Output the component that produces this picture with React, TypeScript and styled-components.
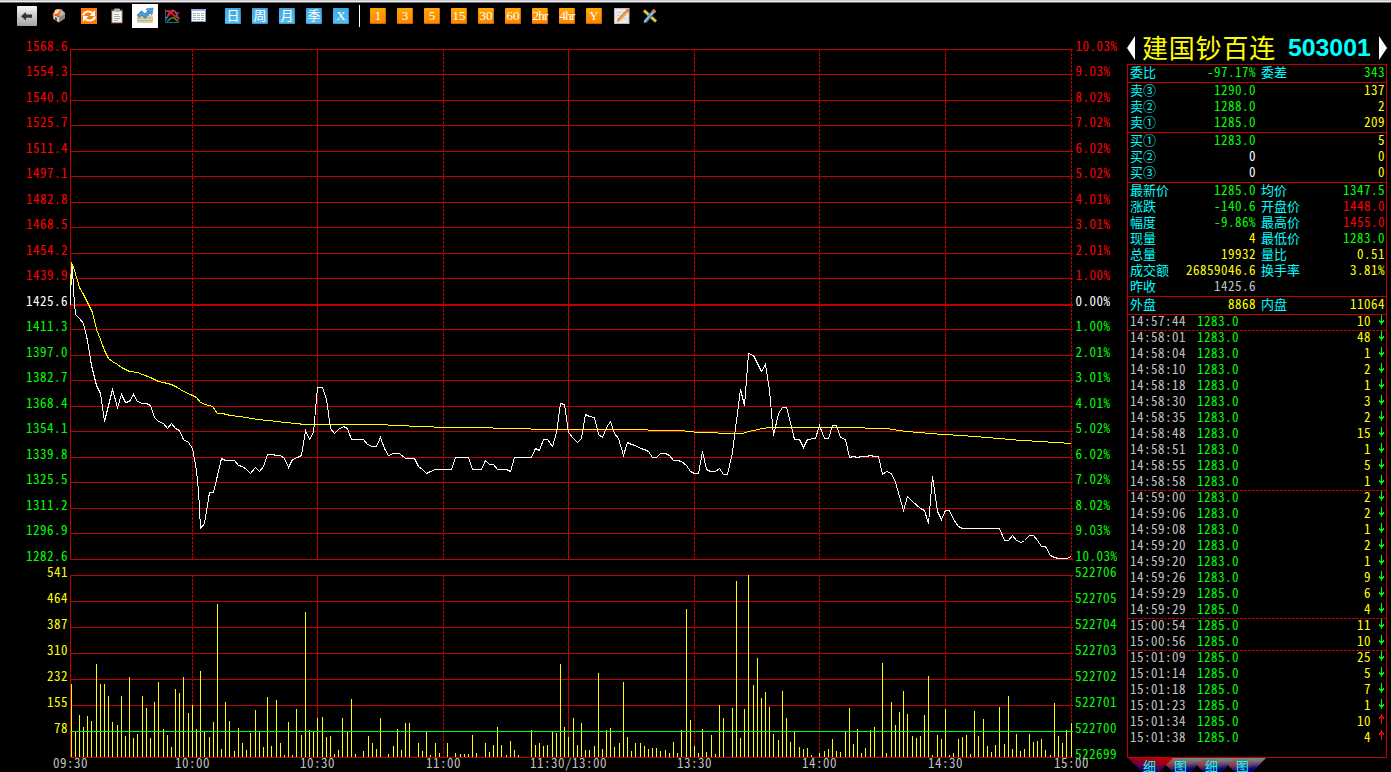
import styled, { createGlobalStyle } from "styled-components";

const RED = "#c00000";
const UP = "#ff0000";
const DOWN = "#00ff00";
const YELLOW = "#ffff00";
const CYAN = "#00ffff";
const GRAY = "#c0c0c0";

const minutes = ["1", "3", "5", "15", "30", "60", "2hr", "4hr", "Y"];
const periods = ["日", "周", "月", "季", "X"];

const prices = [
  "1568.6", "1554.3", "1540.0", "1525.7", "1511.4", "1497.1", "1482.8", "1468.5", "1454.2", "1439.9",
  "1425.6",
  "1411.3", "1397.0", "1382.7", "1368.4", "1354.1", "1339.8", "1325.5", "1311.2", "1296.9", "1282.6",
];
const percents = [
  "10.03%", "9.03%", "8.02%", "7.02%", "6.02%", "5.02%", "4.01%", "3.01%", "2.01%", "1.00%",
  "0.00%",
  "1.00%", "2.01%", "3.01%", "4.01%", "5.02%", "6.02%", "7.02%", "8.02%", "9.03%", "10.03%",
];
const volumeScale = ["541", "464", "387", "310", "232", "155", "78", ""];
const openScale = ["522706", "522705", "522704", "522703", "522702", "522701", "522700", "522699"];

const times = [
  { x: 70, label: "09:30" },
  { x: 192, label: "10:00", dashed: true },
  { x: 317, label: "10:30" },
  { x: 443, label: "11:00", dashed: true },
  { x: 568, label: "11:30/13:00" },
  { x: 694, label: "13:30", dashed: true },
  { x: 819, label: "14:00", dashed: true },
  { x: 945, label: "14:30", dashed: true },
  { x: 1071, label: "15:00", dashed: true },
];

// one entry per minute, height in px
const volumes = [
  73, 26, 42, 30, 41, 36, 93, 73, 73, 61, 35, 32, 61, 21, 80, 19, 23, 61, 49, 19,
  55, 75, 28, 22, 10, 68, 64, 80, 44, 52, 28, 86, 26, 20, 35, 153, 8, 55, 36, 6,
  29, 14, 7, 24, 47, 26, 10, 60, 11, 57, 14, 2, 35, 2, 48, 22, 145, 27, 26, 39,
  40, 20, 21, 3, 7, 39, 26, 58, 3, 0, 6, 21, 14, 8, 39, 0, 3, 11, 28, 7,
  34, 34, 0, 14, 6, 26, 2, 14, 4, 0, 14, 0, 4, 3, 3, 3, 22, 4, 0, 14,
  5, 12, 30, 12, 2, 16, 7, 2, 0, 0, 27, 12, 14, 11, 12, 26, 24, 93, 30, 20,
  39, 12, 34, 7, 7, 11, 84, 8, 27, 29, 10, 14, 75, 20, 6, 14, 14, 11, 8, 9,
  9, 6, 7, 4, 15, 4, 27, 148, 37, 11, 4, 28, 5, 22, 3, 52, 39, 0, 49, 176,
  19, 48, 182, 72, 99, 59, 65, 50, 23, 17, 66, 39, 15, 26, 10, 8, 9, 2, 0, 4,
  6, 8, 18, 6, 5, 26, 49, 13, 28, 4, 9, 27, 30, 0, 94, 4, 55, 32, 45, 66,
  43, 21, 19, 21, 42, 81, 2, 22, 18, 48, 2, 4, 18, 20, 22, 3, 46, 21, 38, 11,
  5, 12, 50, 13, 61, 8, 23, 6, 8, 23, 15, 16, 18, 7, 2, 54, 21, 14, 27, 34,
];

const priceLine =
  "70,304 70,285 71,284 71,267 72,267 73,290 74,302 75,314 79,318 83,323 87,340 91,365 96,385 100,393 104,421 108,405 112,389 117,407 " +
  "121,394 125,402 129,401 133,394 137,401 142,403 146,403 150,405 154,417 158,421 163,423 167,428 171,423 " +
  "175,428 179,430 183,439 188,442 192,448 196,470 198,490 200,528 204,523 209,492 213,492 217,475 221,458 225,460 " +
  "234,460 238,465 242,466 246,469 250,473 255,467 259,471 263,466 267,454 272,454 276,455 280,455 284,458 " +
  "288,467 292,459 297,457 301,455 305,430 309,439 313,432 317,387 322,387 326,399 330,428 334,433 338,429 " +
  "343,426 347,428 351,439 363,439 367,444 372,446 376,446 380,437 384,448 388,455 393,453 399,453 405,458 " +
  "414,458 418,466 422,469 426,473 430,471 435,469 451,469 455,457 468,457 472,469 481,469 485,460 489,464 " +
  "493,464 497,469 506,469 510,471 514,457 531,457 535,448 539,450 543,439 547,439 552,446 556,432 560,403 " +
  "564,404 568,432 573,438 577,442 581,438 585,414 589,416 594,417 598,434 602,437 606,427 610,421 614,433 " +
  "618,438 623,455 627,442 631,444 635,445 640,448 644,449 648,451 652,457 656,457 660,453 665,453 669,455 " +
  "673,460 677,460 681,461 686,465 690,471 694,473 698,473 702,451 706,469 710,471 715,471 719,468 723,474 " +
  "727,474 732,452 736,420 740,389 744,405 748,353 753,355 757,363 761,371 765,364 769,390 773,435 778,413 " +
  "782,407 786,407 790,422 794,439 799,439 803,447 807,439 815,438 819,425 824,438 828,438 832,425 836,425 " +
  "840,437 845,439 849,457 853,456 857,457 861,456 866,456 870,455 874,456 878,456 882,474 886,471 891,473 " +
  "895,482 899,496 903,510 907,496 912,501 920,508 924,510 928,523 932,476 937,511 941,519 945,510 949,510 " +
  "953,519 958,526 962,528 999,528 1004,540 1008,540 1012,535 1016,540 1021,542 1024,540 1029,535 1033,535 " +
  "1037,540 1041,546 1045,546 1050,555 1054,557 1058,558 1066,558 1071,556";

const averageLine =
  "70,285 71,262 74,270 79,287 83,294 87,302 92,312 96,329 100,339 104,350 108,358 112,361 117,364 121,367 " +
  "129,371 137,372 142,374 150,377 158,381 163,382 171,384 177,387 183,391 190,394 196,397 200,402 205,404 " +
  "212,406 217,413 222,413 230,415 246,417 257,419 268,420 285,422 305,424 387,424 388,425 408,425 409,426 " +
  "433,426 434,427 492,427 493,428 530,428 531,429 647,429 648,430 684,430 685,431 693,431 694,432 717,432 " +
  "718,433 742,433 748,431 753,430 762,428 770,427 863,427 866,428 888,428 891,429 900,430 905,431 920,432 " +
  "928,433 945,434 960,435 975,436 985,437 1000,438 1008,439 1022,440 1040,441 1055,442 1071,443";

const sells = [
  ["卖③", "1290.0", "137"],
  ["卖②", "1288.0", "2"],
  ["卖①", "1285.0", "209"],
];
const buys = [
  ["买①", "1283.0", "5"],
  ["买②", "0", "0"],
  ["买③", "0", "0"],
];
const quotes = [
  ["最新价", "1285.0", DOWN, "均价", "1347.5", DOWN],
  ["涨跌", "-140.6", DOWN, "开盘价", "1448.0", UP],
  ["幅度", "-9.86%", DOWN, "最高价", "1455.0", UP],
  ["现量", "4", YELLOW, "最低价", "1283.0", DOWN],
  ["总量", "19932", YELLOW, "量比", "0.51", YELLOW],
  ["成交额", "26859046.6", YELLOW, "换手率", "3.81%", YELLOW],
  ["昨收", "1425.6", GRAY, "", "", GRAY],
];

const deals: [string, string, number, boolean?][] = [
  ["14:57:44", "1283.0", 10],
  ["14:58:01", "1283.0", 48, true],
  ["14:58:04", "1283.0", 1],
  ["14:58:10", "1283.0", 2],
  ["14:58:18", "1283.0", 1],
  ["14:58:30", "1283.0", 3],
  ["14:58:35", "1283.0", 2],
  ["14:58:48", "1283.0", 15],
  ["14:58:51", "1283.0", 1],
  ["14:58:55", "1283.0", 5],
  ["14:58:58", "1283.0", 1],
  ["14:59:00", "1283.0", 2, true],
  ["14:59:06", "1283.0", 2],
  ["14:59:08", "1283.0", 1],
  ["14:59:20", "1283.0", 2],
  ["14:59:20", "1283.0", 1],
  ["14:59:26", "1283.0", 9],
  ["14:59:29", "1285.0", 6],
  ["14:59:29", "1285.0", 4],
  ["15:00:54", "1285.0", 11, true],
  ["15:00:56", "1285.0", 10],
  ["15:01:09", "1285.0", 25, true],
  ["15:01:14", "1285.0", 5],
  ["15:01:18", "1285.0", 7],
  ["15:01:23", "1285.0", 1],
  ["15:01:34", "1285.0", 10],
  ["15:01:38", "1285.0", 4],
];

const priceY = (i: number) => Math.floor(49 + i * 25.5);
const barX = (i: number) => 71 + Math.floor((i * 1000) / 239);
const trend = (i: number) => (i < 10 ? UP : i === 10 ? "#ffffff" : DOWN);

const Chart = () => (
  <ChartArea width="1127" height="740" viewBox="0 32 1127 740">
    <g stroke={RED} strokeWidth="1" shapeRendering="crispEdges">
      {prices.map((p, i) => (
        <line key={p} x1="70" x2="1073" y1={priceY(i) + (i === 10 ? 1 : 0.5)} y2={priceY(i) + (i === 10 ? 1 : 0.5)} strokeWidth={i === 10 ? 2 : 1} />
      ))}
      {openScale.map((v, i) => (
        <line key={v} x1="70" x2="1073" y1={575.5 + i * 26} y2={575.5 + i * 26} />
      ))}
      {times.map((t) => (
        <g key={t.x} strokeDasharray={t.dashed ? "3 1" : undefined}>
          <line x1={t.x + 0.5} x2={t.x + 0.5} y1="49" y2="560" />
          <line x1={t.x + 0.5} x2={t.x + 0.5} y1="575" y2="758" />
        </g>
      ))}
    </g>
    <g fill={YELLOW} shapeRendering="crispEdges">
      {volumes.map((h, i) => (
        <rect key={i} x={barX(i)} y={757 - h} width="1" height={h} />
      ))}
      <rect x="70" y="731" width="1003" height="1" fill={DOWN} />
    </g>
    <g fill="none" strokeWidth="1" shapeRendering="crispEdges" transform="translate(0.5 0.5)">
      <polyline points={averageLine} stroke={YELLOW} />
      <polyline points={priceLine} stroke="#ffffff" />
    </g>
    {prices.map((p, i) => (
      <g key={p} fill={trend(i)}>
        <text x="26" y={priceY(i) + 2}>{p}</text>
        <text x="1075.500" y={priceY(i) + 2}>{percents[i]}</text>
      </g>
    ))}
    {openScale.map((v, i) => (
      <g key={v}>
        <text x={68 - volumeScale[i].length * 7} y={577 + i * 26} fill={YELLOW}>{volumeScale[i]}</text>
        <text x="1075" y={577 + i * 26} fill={DOWN}>{v}</text>
      </g>
    ))}
    {times.map((t) => (
      <text key={t.x} x={t.x + 0.5 - t.label.length * 3.5} y="768" fill={GRAY}>{t.label}</text>
    ))}
  </ChartArea>
);

const BackIcon = () => (
  <svg width="20" height="20" viewBox="0 0 20 20">
    <defs>
      <linearGradient id="back" x1="0" y1="0" x2="0" y2="1">
        <stop offset="0" stopColor="#f6f6f6" />
        <stop offset="1" stopColor="#a4a4a4" />
      </linearGradient>
    </defs>
    <rect width="20" height="20" rx="1" fill="url(#back)" />
    <path d="M4 10.2 9 6v2.6h6v3.2H9v2.6z" fill="#333" />
  </svg>
);

const HomeIcon = () => (
  <svg width="16" height="16" viewBox="0 0 16 16">
    <path d="M2 6.500l6 2.500v5.500L2.500 11z" fill="#d9d4cf" />
    <path d="M8 9l6-3.500v5L8 14.500z" fill="#8d8881" />
    <path d="M1 6.500 5 1.500l5-.5-2.500 7.500z" fill="#e8661b" />
    <path d="M4 2l4-1 1 1-3 4-3 .5z" fill="#f4d8bd" />
    <path d="M10 1l4.500 4.500L8 9.500 8.500 6z" fill="#b9b6b3" />
    <path d="M9.500 1.500 8 8.500" stroke="#f08a3c" strokeWidth="1.500" />
    <path d="M4 9l2 1v3l-2-1.200z" fill="#6a3a1b" />
  </svg>
);

const RefreshIcon = () => (
  <svg width="16" height="16" viewBox="0 0 16 16">
    <rect width="16" height="16" fill="#ff7900" />
    <g fill="none" stroke="#fff" strokeWidth="2">
      <path d="M2 7.500C3 3.500 8 2 11.500 5" />
      <path d="M14 8.500C13 12.500 8 14 4.500 11" />
    </g>
    <path d="M14 2v6H8.500zM2 14V8h5.500z" fill="#fff" />
  </svg>
);

const ClipboardIcon = () => (
  <svg width="16" height="16" viewBox="0 0 16 16">
    <rect x="2" y="1.500" width="12" height="14" rx="1" fill="#7a4630" />
    <rect x="3.200" y="3" width="9.600" height="11.500" fill="#f1f6f4" />
    <rect x="5" y="0.500" width="6" height="3.500" rx="1" fill="#a9adac" />
    <path d="M5 6.500h5M5 8.500h6M5 10.500h6M5 12.500h4" stroke="#9fb7b4" />
  </svg>
);

const TrendIcon = () => (
  <svg width="18" height="18" viewBox="0 0 18 18">
    <path d="M1 10l3-2h12l1 2v5l-1 1H2l-1-1z" fill="#dccda9" />
    <path d="M1 11h16M1 13.500h16" stroke="#b9a67b" strokeWidth="0.700" />
    <path d="M2 9.500 5.500 6l3.500 3 5-5" fill="none" stroke="#256fae" strokeWidth="3.600" />
    <path d="M2 9.500 5.500 6l3.500 3 5-5" fill="none" stroke="#4ba3dd" strokeWidth="2.200" />
    <path d="M10 2l7-1-1 7z" fill="#4ba3dd" stroke="#256fae" strokeWidth="0.600" />
  </svg>
);

const CurvesIcon = () => (
  <svg width="16" height="16" viewBox="0 0 16 16">
    <g fill="none">
      <path d="M1.500 1v13.500H15" stroke="#2d5f9e" />
      <path d="M2 11C5 7 6 1.500 9.500 2.500s3 6 5.500 9" stroke="#2f72d6" strokeWidth="1.800" />
      <path d="M2 3.500c3-2 5 1 8 4l5 3" stroke="#f01818" strokeWidth="1.800" />
      <path d="M3 8.500c2 0 4-6.500 7-5s3 2.500 5 1" stroke="#f01818" strokeWidth="1.600" />
      <path d="M3 13c3-1 4-5 7-3s2 3 4.500 3" stroke="#3b8a28" strokeWidth="1.800" />
    </g>
  </svg>
);

const TableIcon = () => (
  <svg width="16" height="16" viewBox="0 0 16 16" shapeRendering="crispEdges">
    <rect x="0.500" y="1.500" width="14" height="12" fill="#fff" stroke="#8797c4" />
    <rect x="1" y="1" width="14" height="2" fill="#9db0df" />
    <path d="M2 5.500h12M2 7.500h12M2 9.500h12M2 11.500h12" stroke="#a5adbb" strokeDasharray="3 1" />
  </svg>
);

const NoteIcon = () => (
  <svg width="16" height="16" viewBox="0 0 16 16">
    <rect x="0.500" y="0.500" width="14.500" height="15" fill="#e9e9e9" stroke="#bdbdbd" />
    <path d="M3 4.500h9M3 7.500h9M3 10.500h9" stroke="#d0d0d0" />
    <path d="M3 14l1-3L13 1.500l2 2L6 13z" fill="#f3a93b" />
    <path d="M3.500 13.500l1-2.500L13.500 1.500" fill="none" stroke="#8a5c20" strokeWidth="0.700" />
    <path d="M12.500 2l1.200-1.200 2 2L14.500 4z" fill="#d96d5d" />
  </svg>
);

const ToolsIcon = () => (
  <svg width="16" height="16" viewBox="0 0 16 16">
    <path d="M2 2.500 14 13.500" stroke="#77761c" strokeWidth="3.600" />
    <path d="M2 2.500 14 13.500" stroke="#e0d83c" strokeWidth="2" />
    <path d="M3 14 12 3" stroke="#456da3" strokeWidth="3.600" />
    <path d="M2 14.500 12 3" stroke="#9bc0e8" strokeWidth="1.800" />
    <path d="M11 1.500l2.500 3" stroke="#e07c2a" strokeWidth="2.500" />
  </svg>
);

const DealArrow = ({ up }: { up: boolean }) => (
  <svg width="5" height="11" viewBox="0 0 5 11" shapeRendering="crispEdges" fill={up ? UP : DOWN}>
    <g transform={up ? "rotate(180 2.5 5.5)" : undefined}>
      <rect x="2" y="1" width="1" height="10" />
      <rect x="1" y="7" width="3" height="2" />
      <rect y="6" width="1" height="2" />
      <rect x="4" y="6" width="1" height="2" />
    </g>
  </svg>
);

const Tabs = () => (
  <TabBar>
    <svg width="140" height="14" viewBox="0 0 140 14">
      <defs>
        <linearGradient id="active" x1="0.1" y1="1" x2="0.45" y2="0">
          <stop offset="0" stopColor="#000090" />
          <stop offset="1" stopColor="#c00000" />
        </linearGradient>
        <linearGradient id="tabLeft" x1="0" y1="1" x2="0.4" y2="0">
          <stop offset="0.3" stopColor="#b01010" />
          <stop offset="1" stopColor="#808080" />
        </linearGradient>
        <linearGradient id="tabRight" x1="1" y1="1" x2="0.6" y2="0">
          <stop offset="0.3" stopColor="#000080" />
          <stop offset="0.9" stopColor="#808080" stopOpacity="0" />
        </linearGradient>
      </defs>
      {[93, 62, 31].map((x) => (
        <g key={x} transform={`translate(${x} 0)`}>
          <path d="M0 0h45L31 14H14z" fill="url(#tabLeft)" />
          <path d="M0 0h45L31 14H14z" fill="url(#tabRight)" />
        </g>
      ))}
      <path d="M0 0h45L31 14H14z" fill="url(#active)" />
      {["细", "图", "细", "图"].map((t, i) => (
        <text key={i} x={15 + i * 31} y="13" fill={CYAN}>{t}</text>
      ))}
    </svg>
  </TabBar>
);

export default function App() {
  return (
    <Window>
      <GlobalStyle />
      <TopEdge />
      <Toolbar>
        <Slot $width={32}><BackIcon /></Slot>
        <Slot $width={32}><HomeIcon /></Slot>
        <Slot $width={27}><RefreshIcon /></Slot>
        <Slot $width={30}><ClipboardIcon /></Slot>
        <Slot $width={26} $active><TrendIcon /></Slot>
        <Slot $width={28}><CurvesIcon /></Slot>
        <Slot $width={26}><TableIcon /></Slot>
        <Buttons $left={13}>
          {periods.map((p) => <PeriodButton key={p} $tone="blue">{p}</PeriodButton>)}
        </Buttons>
        <Separator />
        <Buttons $left={10}>
          {minutes.map((m) => <PeriodButton key={m} $tone="orange" $tight={m.length > 2}>{m}</PeriodButton>)}
        </Buttons>
        <NoteSlot><NoteIcon /></NoteSlot>
        <Slot $width={28}><ToolsIcon /></Slot>
      </Toolbar>
      <Body>
        <Chart />
        <Side>
          <Title>
            <svg width="8" height="24" viewBox="0 0 8 24"><path d="M8 0v24L0 12z" fill="#fff" /></svg>
            <Name>建国钞百连</Name>
            <Code>503001</Code>
            <svg width="8" height="24" viewBox="0 0 8 24"><path d="M0 0v24l8-12z" fill="#fff" /></svg>
          </Title>
          <Panel>
            <Section $height={18}>
              <Row>
                <Label>委比</Label><Value $color={DOWN}>-97.17%</Value>
                <Label>委差</Label><Value $color={DOWN}>343</Value>
              </Row>
            </Section>
            {[sells, buys].map((rows, i) => (
              <Section key={i} $height={50}>
                {rows.map(([label, price, amount]) => (
                  <Row key={label}>
                    <Label>{label}</Label>
                    <Value $color={price === "0" ? "#fff" : DOWN}>{price}</Value>
                    <Label />
                    <Value $color={YELLOW}>{amount}</Value>
                  </Row>
                ))}
              </Section>
            ))}
            <Section $height={114}>
              {quotes.map(([l1, v1, c1, l2, v2, c2]) => (
                <Row key={l1}>
                  <Label>{l1}</Label><Value $color={c1}>{v1}</Value>
                  <Label>{l2}</Label><Value $color={c2}>{v2}</Value>
                </Row>
              ))}
            </Section>
            <Section $height={18}>
              <Row>
                <Label>外盘</Label><Value $color={YELLOW}>8868</Value>
                <Label>内盘</Label><Value $color={YELLOW}>11064</Value>
              </Row>
            </Section>
            <Deals>
              {deals.map(([time, price, amount, split], i) => (
                <Deal key={i} $first={i === 0} $split={split}>
                  <DealTime>{time}</DealTime>
                  <DealPrice>{price}</DealPrice>
                  <DealAmount>{amount}</DealAmount>
                  <DealArrow up={i > 24} />
                </Deal>
              ))}
            </Deals>
          </Panel>
          <Tabs />
        </Side>
      </Body>
    </Window>
  );
}

const GlobalStyle = createGlobalStyle`
  body {
    margin: 0;
    background: #000;
    overflow: hidden;
  }
  svg {
    display: block;
    flex: none;
  }
`;

const Window = styled.div`
  width: 1391px;
  height: 772px;
  overflow: hidden;
  background: #000;
  font-family: "Noto Sans CJK SC", sans-serif;
  font-size: 13px;
`;

const TopEdge = styled.div`
  height: 1px;
  background: #c9c9cd;
  border-bottom: 1px solid #f0f0f0;
  box-shadow: 0 1px 0 #6a6a6e;
`;

const Toolbar = styled.div`
  display: flex;
  align-items: center;
  height: 28px;
  padding: 0 0 2px 11px;
`;

const Slot = styled.div<{ $width: number; $active?: boolean }>`
  display: flex;
  justify-content: center;
  align-items: center;
  width: ${(p) => p.$width}px;
  height: 24px;
  background: ${(p) => (p.$active ? "#fff" : "transparent")};
`;

const NoteSlot = styled.div`
  padding: 0 6px 0 2px;
`;

const Buttons = styled.div<{ $left: number }>`
  display: flex;
  gap: 11px;
  margin: 0 10px 0 ${(p) => p.$left}px;
`;

const PeriodButton = styled.button<{ $tone: "blue" | "orange"; $tight?: boolean }>`
  display: flex;
  justify-content: center;
  align-items: center;
  width: 16px;
  height: 16px;
  padding: 0;
  border: 0;
  border-radius: 1px;
  color: #fff;
  font: 13px/16px "Liberation Serif", "Noto Sans CJK SC", serif;
  letter-spacing: ${(p) => (p.$tight ? "-0.8px" : "0")};
  box-shadow: inset -1px -1px 0 rgba(0, 0, 0, 0.2);
  background: ${(p) =>
    p.$tone === "blue" ? "linear-gradient(#3fa6e4, #55c0f6)" : "linear-gradient(#ffa800, #ff8200)"};
`;

const Separator = styled.div`
  width: 1px;
  height: 22px;
  background: #fff;
`;

const Body = styled.div`
  display: flex;
`;

const ChartArea = styled.svg`
  text {
    font-size: 13px;
    font-feature-settings: "hwid";
    letter-spacing: 0.5px;
  }
`;

const Side = styled.div`
  width: 260px;
`;

const Title = styled.div`
  display: flex;
  align-items: center;
  height: 32px;
`;

const Name = styled.div`
  margin: 0 11px 2px 7px;
  width: 135px;
  color: ${YELLOW};
  font-size: 26px;
  letter-spacing: 0.8px;
  line-height: 30px;
  white-space: nowrap;
`;

const Code = styled.div`
  width: 91px;
  color: ${CYAN};
  font: bold 24.8px/30px "Liberation Sans", sans-serif;
`;

const Panel = styled.div`
  box-sizing: border-box;
  height: 694px;
  border: 1px solid ${RED};
  border-top: 0;
`;

const Section = styled.div<{ $height: number }>`
  box-sizing: border-box;
  height: ${(p) => p.$height}px;
  border-top: 1px solid ${RED};
`;

const Row = styled.div`
  display: grid;
  grid-template-columns: 50px 76px 52px 1fr;
  height: 16px;
  padding: 0 1px 0 2px;
  line-height: 14px;
`;

const Label = styled.span`
  color: ${CYAN};
  white-space: nowrap;
  &:nth-child(3) {
    padding-left: 5px;
  }
`;

const Value = styled.span<{ $color: string }>`
  color: ${(p) => p.$color};
  white-space: nowrap;
  font-feature-settings: "hwid";
  letter-spacing: 0.5px;
  justify-self: end;
`;

const Deals = styled.div`
  font-feature-settings: "hwid";
  letter-spacing: 0.5px;
`;

const Deal = styled.div<{ $first: boolean; $split?: boolean }>`
  display: flex;
  align-items: flex-start;
  height: 16px;
  padding: 0 2px 0 2px;
  box-sizing: border-box;
  line-height: 13px;
  background: ${(p) =>
    p.$first
      ? `linear-gradient(${RED}, ${RED}) 0 0 / 100% 1px no-repeat`
      : p.$split
      ? `repeating-linear-gradient(90deg, ${RED} 0 3px, transparent 3px 4px) 0 0 / 100% 1px no-repeat`
      : "none"};
`;

const DealTime = styled.span`
  width: 67px;
  color: ${GRAY};
`;

const DealPrice = styled.span`
  width: 80px;
  color: ${DOWN};
`;

const DealAmount = styled.span`
  flex: 1;
  margin-right: 8px;
  color: ${YELLOW};
  text-align: right;
`;

const TabBar = styled.div`
  height: 14px;
  padding-left: 1px;
  text {
    font-size: 13px;
  }
`;
